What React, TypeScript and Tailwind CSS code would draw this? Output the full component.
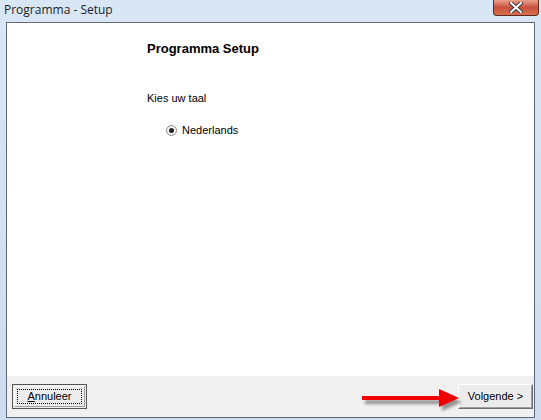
import React from 'react';

export default function App() {
  return (
    <div className="w-[541px] h-[420px] bg-gradient-to-b from-[#d9e6f5] to-[#cddcef] flex flex-col overflow-hidden font-['Liberation_Sans',Arial,sans-serif] text-[11px] text-black">
      {/* Title bar */}
      <div className="h-[22px] shrink-0 relative flex items-center pl-[4px]">
        <span className="font-['Open_Sans',sans-serif] text-[12px] text-[#1e1e1e] -mt-[3px]">Programma - Setup</span>
        <div className="absolute right-[2px] top-0 w-[46px] h-[16px] rounded-b-[4px] border border-t-0 border-[#5e2a24] bg-gradient-to-b from-[#e8a08c] via-[#c8503c] to-[#d9704e] flex items-center justify-center">
          <svg width="14" height="11" viewBox="0 0 14 11">
            <path d="M2 1 L12 10 M12 1 L2 10" stroke="#3b3b3b" strokeWidth="4" strokeLinecap="square" />
            <path d="M2 1 L12 10 M12 1 L2 10" stroke="#ffffff" strokeWidth="2" strokeLinecap="square" />
          </svg>
        </div>
      </div>

      {/* Client area */}
      <div className="mx-[6px] h-[396px] shrink-0 border border-[#5f6b7a] flex flex-col relative">
        <div className="flex-1 bg-white pl-[140px] pt-[18px]">
          <div className="font-bold text-[13px] leading-[16px]">Programma Setup</div>
          <div className="mt-[34px] leading-[14px]">Kies uw taal</div>
          <div className="mt-[18px] ml-[19px] flex items-center gap-[5px] leading-[14px]">
            <span className="w-[11px] h-[11px] rounded-full border border-[#8a8a8a] bg-[#f4f4f4] flex items-center justify-center">
              <span className="w-[5px] h-[5px] rounded-full bg-[#222]" />
            </span>
            <span>Nederlands</span>
          </div>
        </div>
        <div className="h-[41px] shrink-0 bg-[#f0f0f0] flex items-start justify-between pt-[8px] pl-[5px] pr-[1px]">
          <button className="w-[75px] h-[25px] border border-[#555] bg-[#ececec] p-[1px]">
            <div className="h-full border border-white border-r-[#a0a0a0] border-b-[#a0a0a0] p-[2px]">
              <div className="h-full border border-dotted border-black flex items-center justify-center">
                <span><span className="underline">A</span>nnuleer</span>
              </div>
            </div>
          </button>
          <button className="w-[75px] h-[25px] border border-white border-r-[#6e6e6e] border-b-[#6e6e6e] bg-[#ececec]">
            <div className="h-full border border-transparent border-r-[#a0a0a0] border-b-[#a0a0a0] flex items-center justify-center">
              Volgende &gt;
            </div>
          </button>
        </div>
        {/* red arrow overlay */}
        <svg className="absolute left-[349px] top-[366px]" width="110" height="28" viewBox="0 0 110 28">
          <defs>
            <filter id="sh" x="-10%" y="-50%" width="120%" height="200%">
              <feGaussianBlur stdDeviation="1.5" />
            </filter>
          </defs>
          <g filter="url(#sh)" fill="#7a7a7a" opacity="0.8">
            <rect x="9" y="11" width="88" height="4" />
            <path d="M86 4 L106 13 L86 22 Z" />
          </g>
          <rect x="6" y="7" width="86" height="4" fill="#f00000" />
          <path d="M83 0 L103 9 L83 18 Z" fill="#f00000" />
        </svg>
      </div>
    </div>
  );
}
